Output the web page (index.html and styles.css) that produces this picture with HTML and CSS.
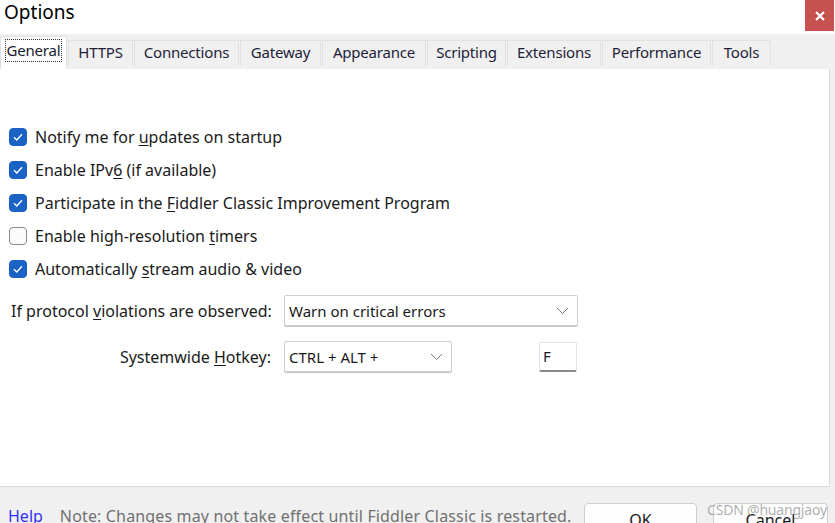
FILE: index.html
```html
<!DOCTYPE html>
<html>
<head>
<meta charset="utf-8">
<link rel="stylesheet" href="styles.css">
</head>
<body>
<div class="window">
  <div class="titlebar">
    <span class="title">Options</span>
    <span class="close"><svg width="12" height="10" viewBox="0 0 12 10"><path d="M2 1 L10 9 M10 1 L2 9" stroke="#fff" stroke-width="2.2"/></svg></span>
  </div>
  <div class="tabs">
    <div class="tab active"><span class="focus">General</span></div>
    <div class="tab w-https">HTTPS</div>
    <div class="tab w-conn">Connections</div>
    <div class="tab w-gate">Gateway</div>
    <div class="tab w-app">Appearance</div>
    <div class="tab w-scr">Scripting</div>
    <div class="tab w-ext">Extensions</div>
    <div class="tab w-perf">Performance</div>
    <div class="tab w-tools">Tools</div>
  </div>
  <div class="panel">
    <div class="checks">
      <label class="check"><span class="box on"><svg width="12" height="10" viewBox="0 0 12 10"><path d="M2 5.2 L4.8 8 L10 2.2" fill="none" stroke="#fff" stroke-width="1.4"/></svg></span><span class="txt">Notify me for <u>u</u>pdates on startup</span></label>
      <label class="check"><span class="box on"><svg width="12" height="10" viewBox="0 0 12 10"><path d="M2 5.2 L4.8 8 L10 2.2" fill="none" stroke="#fff" stroke-width="1.4"/></svg></span><span class="txt">Enable IPv<u>6</u> (if available)</span></label>
      <label class="check"><span class="box on"><svg width="12" height="10" viewBox="0 0 12 10"><path d="M2 5.2 L4.8 8 L10 2.2" fill="none" stroke="#fff" stroke-width="1.4"/></svg></span><span class="txt">Participate in the <u>F</u>iddler Classic Improvement Program</span></label>
      <label class="check"><span class="box"></span><span class="txt">Enable high-resolution <u>t</u>imers</span></label>
      <label class="check"><span class="box on"><svg width="12" height="10" viewBox="0 0 12 10"><path d="M2 5.2 L4.8 8 L10 2.2" fill="none" stroke="#fff" stroke-width="1.4"/></svg></span><span class="txt">Automatically <u>s</u>tream audio &amp; video</span></label>
    </div>
    <div class="row row-proto">
      <span class="lbl">If protocol <u>v</u>iolations are observed:</span>
      <div class="select wide"><span>Warn on critical errors</span><svg width="13" height="8" viewBox="0 0 13 8"><path d="M1 1 L6.5 6.5 L12 1" fill="none" stroke="#7a7a7a" stroke-width="1"/></svg></div>
    </div>
    <div class="row row-hot">
      <span class="lbl right">Systemwide <u>H</u>otkey:</span>
      <div class="select narrow"><span>CTRL + ALT +</span><svg width="13" height="8" viewBox="0 0 13 8"><path d="M1 1 L6.5 6.5 L12 1" fill="none" stroke="#7a7a7a" stroke-width="1"/></svg></div>
      <div class="textbox">F</div>
    </div>
  </div>
  <div class="footer">
    <a class="help">Help</a>
    <span class="note">Note: Changes may not take effect until Fiddler Classic is restarted.</span>
    <div class="btn ok">OK</div>
    <div class="btn cancel">Cancel</div>
    <span class="watermark">CSDN @huangjaoy</span>
  </div>
</div>
</body>
</html>
```
FILE: styles.css
```css
html, body { margin: 0; padding: 0; }
body { background: #f0f0f0; font-family: "Noto Sans", "Open Sans", sans-serif; color: #1a1a1a; }
.window { width: 835px; height: 523px; overflow: hidden; display: flex; flex-direction: column; background: #f0f0f0; }
.titlebar { height: 34px; background: #fff; display: flex; align-items: flex-start; justify-content: space-between; flex: none; }
.title { font-size: 19px; padding: 0 0 0 4px; line-height: 24px; color: #000; }
.close { width: 29px; height: 31px; background: #c75050; display: flex; align-items: center; justify-content: center; margin-right: 1px; }
.tabs { height: 35px; display: flex; align-items: flex-end; flex: none; padding-bottom: 3px; box-sizing: border-box; position: relative; z-index: 2; }
.tab { height: 26px; box-sizing: border-box; border: 1px solid #e2e2e2; border-bottom: none; background: #f0f0f0; font-size: 15px; color: #1e1e3a; display: flex; align-items: center; justify-content: center; margin-left: 1px; letter-spacing: -0.2px; padding-bottom: 3px; }
.tab.active { height: 33px; width: 67px; background: #fff; margin: 0 0 -3px 0; border: 1px solid #e0e0e0; border-bottom: none; align-items: flex-start; padding: 2px 0 0 0; }
.focus { border: 1px dotted #333; padding: 0 1px; line-height: 21px; color: #1a1a2e; }
.w-https { width: 65px; }
.w-conn { width: 105px; }
.w-gate { width: 81px; }
.w-app { width: 104px; }
.w-scr { width: 79px; }
.w-ext { width: 94px; }
.w-perf { width: 109px; }
.w-tools { width: 59px; }
.panel { height: 418px; width: 830px; background: #fff; border-right: 1px solid #dcdcdc; border-bottom: 1px solid #dcdcdc; box-sizing: border-box; flex: none; padding-top: 58px; font-size: 16px; }
.checks { display: flex; flex-direction: column; gap: 13px; padding-left: 9px; }
.check { display: flex; align-items: center; height: 20px; gap: 8px; color: #1a1a1a; }
.box { width: 18px; height: 18px; box-sizing: border-box; border-radius: 4px; border: 1px solid #8a8a8a; background: #fbfbfb; display: flex; align-items: center; justify-content: center; flex: none; }
.box.on { background: #1a62c4; border-color: #1a62c4; }
u { text-decoration-thickness: 1px; text-underline-offset: 2px; }
.row { display: flex; align-items: center; }
.row-proto { margin-top: 16px; padding-left: 11px; }
.row-proto .lbl { width: 273px; }
.row-hot { margin-top: 15px; }
.lbl.right { width: 271px; text-align: right; margin-right: 13px; }
.select { height: 31px; box-sizing: border-box; border: 1px solid #cfcfcf; border-radius: 2px; display: flex; align-items: center; justify-content: space-between; padding: 0 8px 0 4px; background: #fff; box-shadow: 0 1px 0 #c4c4c4; font-size: 15px; }
.select.wide { width: 294px; }
.select.narrow { width: 168px; }
.textbox { margin-left: 87px; width: 38px; height: 30px; box-sizing: border-box; border: 1px solid #e2e2e2; border-bottom: 2px solid #8a8a8a; border-radius: 2px; padding: 3px 0 0 3px; color: #1a1a2e; font-size: 15px; }
.footer { flex: 1; display: flex; align-items: flex-start; position: relative; padding: 14px 7px 0 0; box-sizing: border-box; }
.help { color: #3030ff; font-size: 16px; margin: 4px 0 0 8px; }
.note { color: #707070; font-size: 16px; margin: 4px 0 0 17px; white-space: nowrap; letter-spacing: 0.15px; }
.btn { height: 36px; box-sizing: border-box; border: 1px solid #cfcfcf; border-radius: 4px; background: #fdfdfd; font-size: 16px; display: flex; justify-content: center; padding-top: 5px; color: #1a1a1a; margin-top: 2px; }
.ok { width: 113px; margin-left: auto; }
.cancel { width: 115px; margin-left: 16px; }
.watermark { position: absolute; left: 707px; top: 13px; font-size: 14px; color: rgba(150,150,150,0.75); letter-spacing: -0.2px; }
```
